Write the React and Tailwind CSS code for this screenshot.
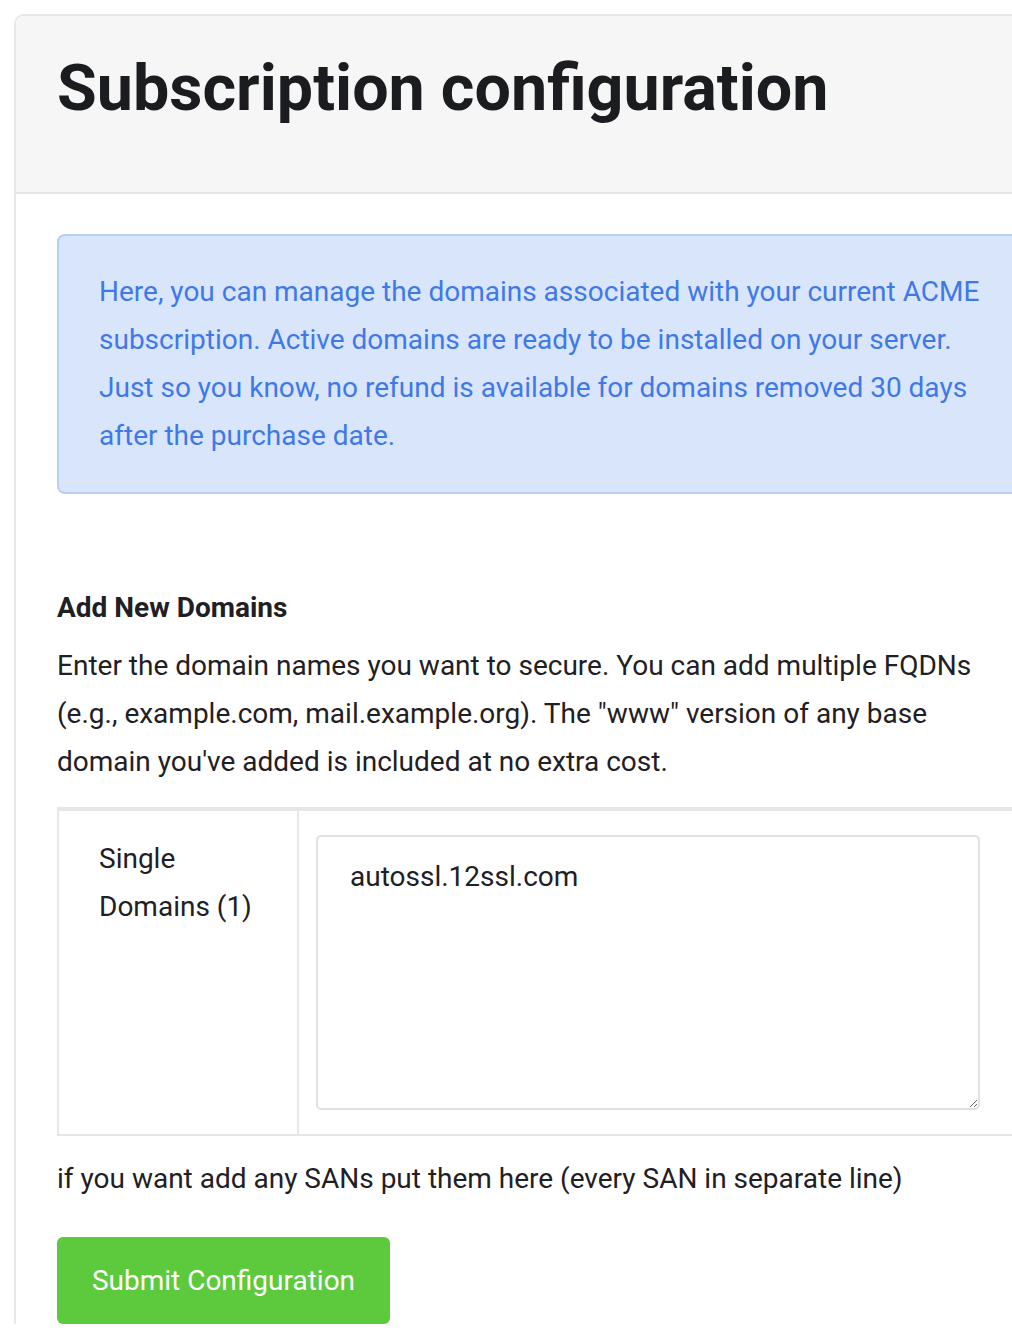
import React from 'react';

const App = () => (
  <div className="w-[1012px] h-[1338px] overflow-hidden bg-white" style={{ fontFamily: 'Roboto, "Noto Sans", sans-serif' }}>
    <div className="pt-[14px] pl-[14px]">
      <div className="w-[1080px] border-2 border-[#e8e8ea] border-r-0 border-b-0 rounded-tl-[10px] bg-white text-[#1f2024]">
        {/* Header */}
        <div className="h-[178px] bg-[#f6f6f6] border-b-2 border-[#e6e6e8] rounded-tl-[10px] pl-[41px] pt-[36px]">
          <h1 className="text-[64.6px] leading-[72px] font-bold text-[#1b1c20]">Subscription configuration</h1>
        </div>

        <div className="pl-[41px] pt-[40px]">
          {/* Alert */}
          <div className="border-2 border-[#b9cef7] bg-[#d9e5fb] rounded-l-[8px] border-r-0 pl-[40px] pt-[32px] pb-[32px] pr-[100px] text-[28px] leading-[48px] text-[#3f79e8]">
            Here, you can manage the domains associated with your current ACME subscription. Active domains are ready to be installed on your server. Just so you know, no refund is available for domains removed 30 days after the purchase date.
          </div>

          <h2 className="mt-[90px] text-[28px] leading-[48px] font-bold">Add New Domains</h2>
          <p className="mt-[10px] w-[930px] text-[28px] leading-[48px]">
            Enter the domain names you want to secure. You can add multiple FQDNs (e.g., example.com, mail.example.org). The "www" version of any base domain you've added is included at no extra cost.
          </p>

          {/* Table */}
          <div className="mt-[21px] flex border-t-4 border-l-2 border-b-2 border-[#e6e6e9] text-[28px] leading-[48px]">
            <div className="w-[240px] shrink-0 border-r-2 border-[#e6e6e9] pl-[40px] pt-[24px] pr-[20px]">
              Single Domains (1)
            </div>
            <div className="flex-1 pl-[17px] pt-[24px] pb-[24px]">
              <textarea
                className="block w-[664px] h-[275px] border-2 border-[#e0e0e4] rounded-[5px] pl-[32px] pt-[16px] text-[28px] leading-[48px] text-[#1f2024] outline-none"
                defaultValue="autossl.12ssl.com"
              />
            </div>
          </div>

          <p className="mt-[19px] text-[28px] leading-[48px]">if you want add any SANs put them here (every SAN in separate line)</p>

          <button className="mt-[34px] w-[333px] h-[87px] bg-[#5dc93c] rounded-[6px] text-white text-[28px] leading-[48px]">
            Submit Configuration
          </button>
        </div>
      </div>
    </div>
  </div>
);

export default App;
